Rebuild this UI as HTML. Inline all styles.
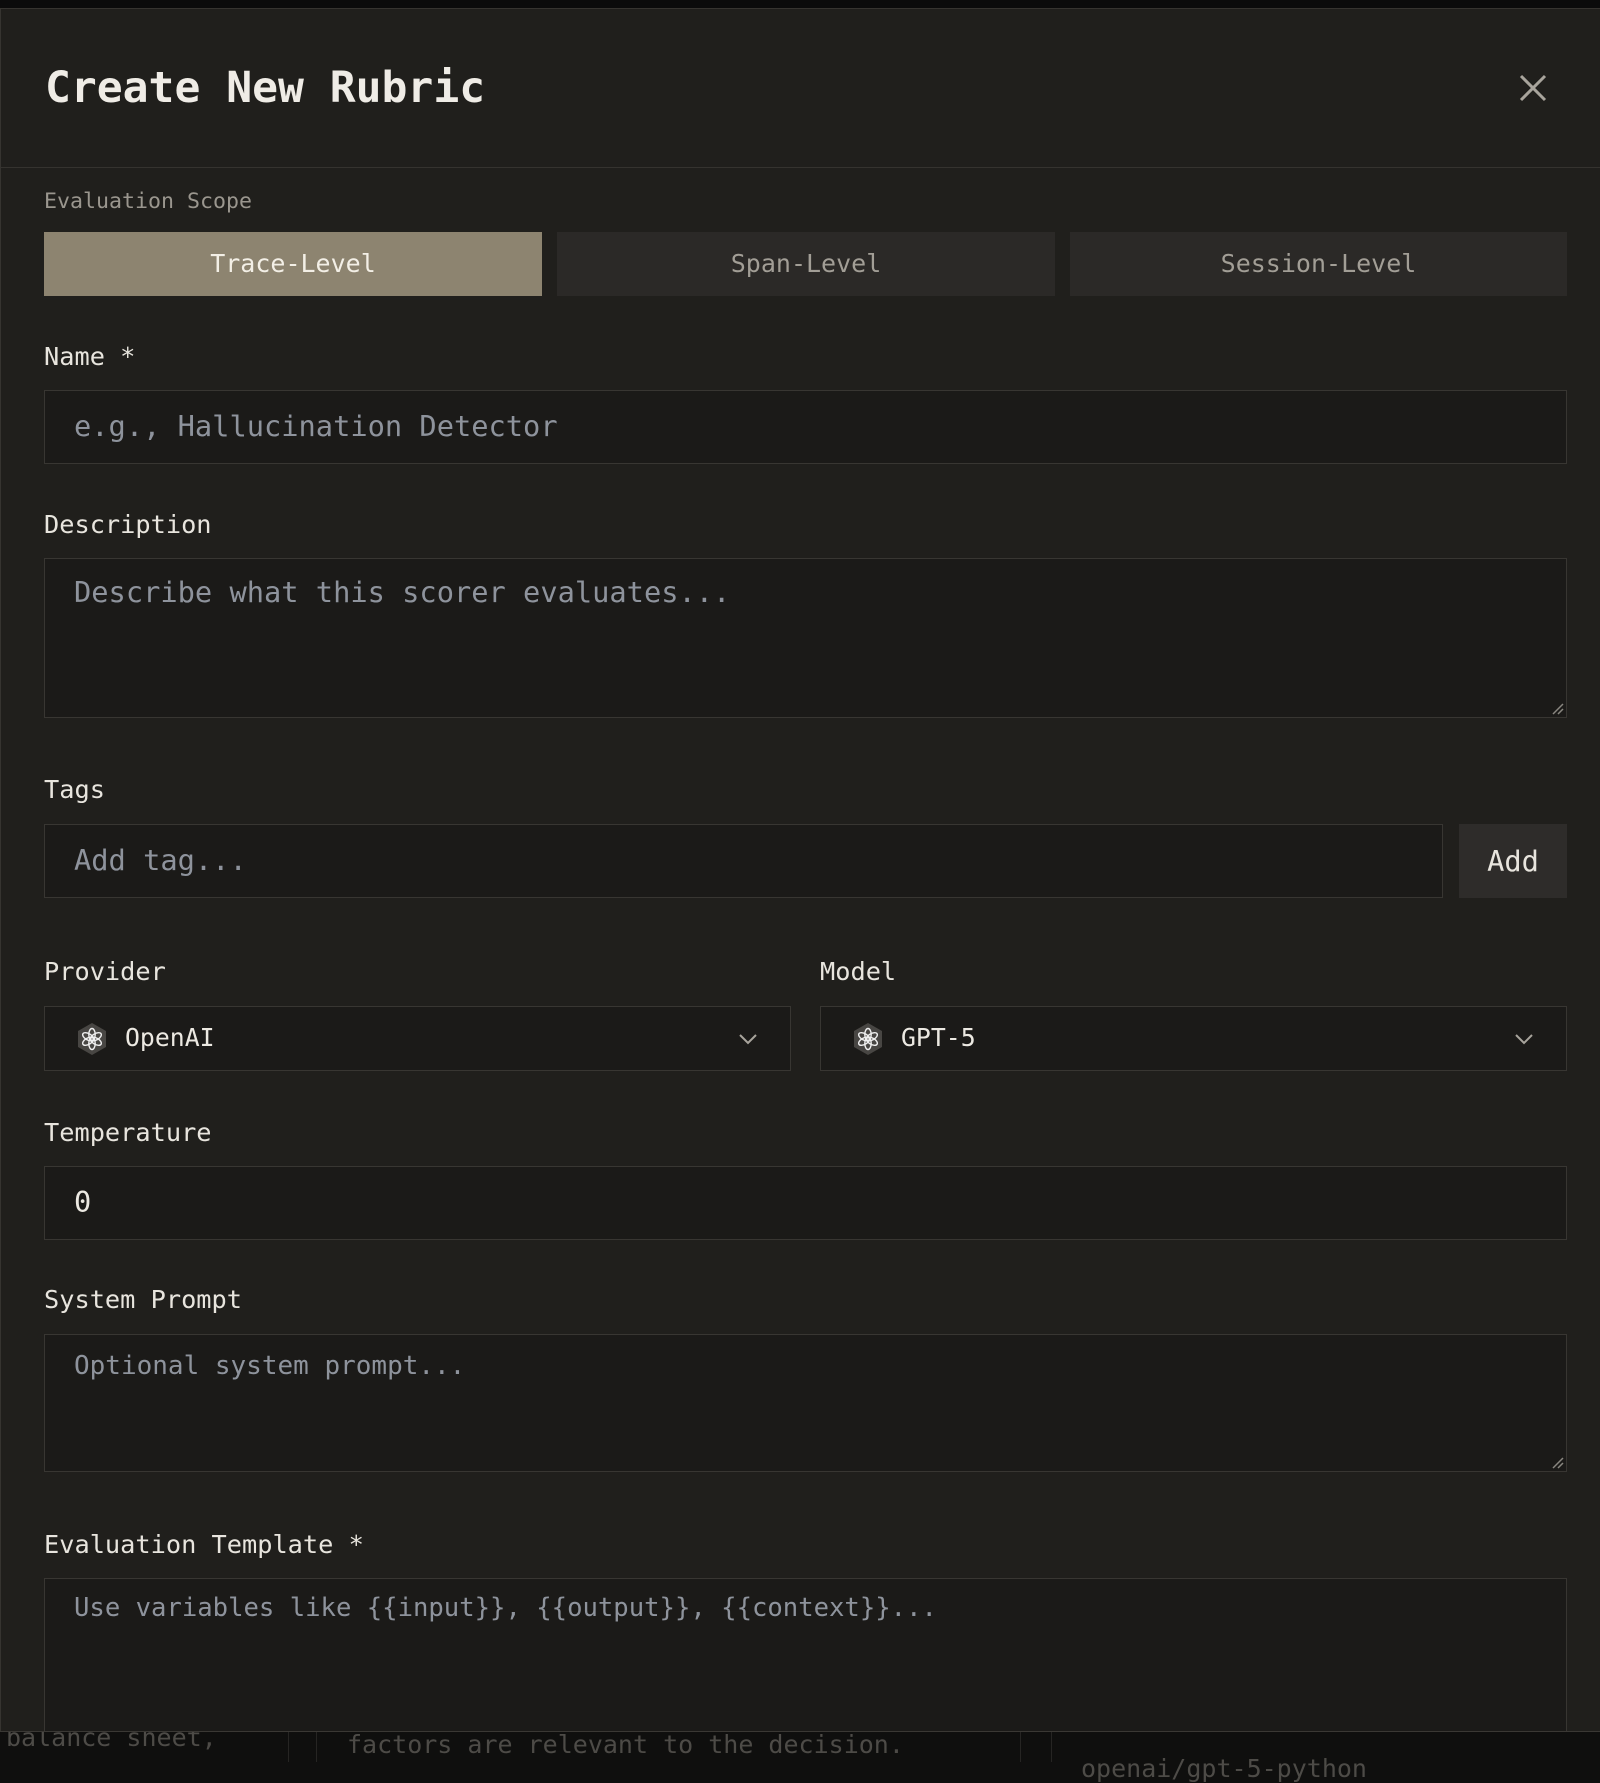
<!DOCTYPE html>
<html><head><meta charset="utf-8"><style>
*{box-sizing:border-box;margin:0;padding:0}
body{width:1600px;height:1762px;background:#0f0f0e;position:relative;overflow:hidden;font-family:"DejaVu Sans Mono","Liberation Mono",monospace;color:#e8e5de}
.a{position:absolute}
.modal{position:absolute;left:0;top:8px;width:1640px;height:1724px;background:#201f1c;border:1px solid #363430;overflow:hidden}
.top{position:absolute;left:0;top:0;width:1600px;height:8px;background:#0b0b0b}
.lbl{position:absolute;left:44px;font-size:25.3px;line-height:30px;color:#e8e5de}
.box{position:absolute;background:#1b1a18;border:1px solid #383632}
.ph{position:absolute;left:29px;font-size:28.7px;color:#8e939c;white-space:pre}
.tab{position:absolute;top:232px;height:64px;font-size:25px;line-height:64px;text-align:center;background:#2b2927;color:#a29e96}
.bgt{position:absolute;font-size:25px;color:#4d4b47;white-space:pre}
</style></head><body>
<div class="top"></div>
<div class="bgt" style="left:6px;top:1723px">balance sheet,</div>
<div class="bgt" style="left:347px;top:1730px">factors are relevant to the decision.</div>
<div class="bgt" style="left:1081px;top:1754px">openai/gpt-5-python</div>
<div class="a" style="left:288px;top:1732px;width:1px;height:30px;background:#262523"></div>
<div class="a" style="left:316px;top:1732px;width:1px;height:30px;background:#262523"></div>
<div class="a" style="left:1020px;top:1732px;width:1px;height:30px;background:#262523"></div>
<div class="a" style="left:1051px;top:1732px;width:1px;height:30px;background:#262523"></div>

<div class="modal">
 <div class="a" style="left:44px;top:52px;font-size:43px;font-weight:bold;line-height:54px;color:#efece6">Create New Rubric</div>
 <svg class="a" style="left:1517px;top:64px" width="30" height="30" viewBox="0 0 30 30"><path d="M3 3L27 27M27 3L3 27" stroke="#a8a49c" stroke-width="3"/></svg>
 <div class="a" style="left:0;top:158px;width:1640px;height:1px;background:#35332f"></div>
</div>

<div class="a" style="left:44px;top:189px;font-size:21.6px;line-height:26px;color:#9a968e">Evaluation Scope</div>
<div class="tab" style="left:44px;width:498px;background:#8d8470;color:#f3efe6">Trace-Level</div>
<div class="tab" style="left:557px;width:498px">Span-Level</div>
<div class="tab" style="left:1070px;width:497px">Session-Level</div>

<div class="lbl" style="top:342px">Name *</div>
<div class="box" style="left:44px;top:390px;width:1523px;height:74px"><div class="ph" style="top:18px">e.g., Hallucination Detector</div></div>

<div class="lbl" style="top:510px">Description</div>
<div class="box" style="left:44px;top:558px;width:1523px;height:160px"><div class="ph" style="top:16px">Describe what this scorer evaluates...</div>
<svg class="a" style="right:2px;bottom:2px" width="14" height="14"><path d="M13 3L3 13M13 8L8 13" stroke="#8a8780" stroke-width="1.5"/></svg></div>

<div class="lbl" style="top:775px">Tags</div>
<div class="box" style="left:44px;top:824px;width:1399px;height:74px"><div class="ph" style="top:18px">Add tag...</div></div>
<div class="a" style="left:1459px;top:824px;width:108px;height:74px;background:#2e2c2a;font-size:28.7px;line-height:74px;text-align:center;color:#e8e5de">Add</div>

<div class="lbl" style="top:957px">Provider</div>
<div class="lbl" style="top:957px;left:820px">Model</div>
<div class="box" style="left:44px;top:1006px;width:747px;height:65px">
 <svg class="a" style="left:30px;top:15px" width="34" height="34" viewBox="0 0 34 34"><path d="M17 1L31 9V25L17 33L3 25V9Z" fill="#484643"/><g fill="none" stroke="#eee" stroke-width="1.4"><g id="p"><ellipse cx="17" cy="12.5" rx="3.2" ry="6"/></g><use href="#p" transform="rotate(60 17 17)"/><use href="#p" transform="rotate(120 17 17)"/><use href="#p" transform="rotate(180 17 17)"/><use href="#p" transform="rotate(240 17 17)"/><use href="#p" transform="rotate(300 17 17)"/></g></svg>
 <div class="a" style="left:80px;top:16px;font-size:24.8px;color:#ece9e2">OpenAI</div>
 <svg class="a" style="left:693px;top:25px" width="20" height="14"><path d="M2 3L10 11L18 3" stroke="#a8a49c" stroke-width="2" fill="none"/></svg>
</div>
<div class="box" style="left:820px;top:1006px;width:747px;height:65px">
 <svg class="a" style="left:30px;top:15px" width="34" height="34" viewBox="0 0 34 34"><path d="M17 1L31 9V25L17 33L3 25V9Z" fill="#484643"/><g fill="none" stroke="#eee" stroke-width="1.4"><g id="q"><ellipse cx="17" cy="12.5" rx="3.2" ry="6"/></g><use href="#q" transform="rotate(60 17 17)"/><use href="#q" transform="rotate(120 17 17)"/><use href="#q" transform="rotate(180 17 17)"/><use href="#q" transform="rotate(240 17 17)"/><use href="#q" transform="rotate(300 17 17)"/></g></svg>
 <div class="a" style="left:80px;top:16px;font-size:24.8px;color:#ece9e2">GPT-5</div>
 <svg class="a" style="left:693px;top:25px" width="20" height="14"><path d="M2 3L10 11L18 3" stroke="#a8a49c" stroke-width="2" fill="none"/></svg>
</div>

<div class="lbl" style="top:1118px">Temperature</div>
<div class="box" style="left:44px;top:1166px;width:1523px;height:74px"><div class="ph" style="top:18px;color:#ece9e2">0</div></div>

<div class="lbl" style="top:1285px">System Prompt</div>
<div class="box" style="left:44px;top:1334px;width:1523px;height:138px"><div class="ph" style="top:16px;font-size:26px">Optional system prompt...</div>
<svg class="a" style="right:2px;bottom:2px" width="14" height="14"><path d="M13 3L3 13M13 8L8 13" stroke="#8a8780" stroke-width="1.5"/></svg></div>

<div class="lbl" style="top:1530px">Evaluation Template *</div>
<div class="box" style="left:44px;top:1578px;width:1523px;height:153px;border-bottom:none"><div class="ph" style="top:14px;font-size:25.6px">Use variables like {{input}}, {{output}}, {{context}}...</div></div>
<div class="a" style="left:0;top:1731px;width:1600px;height:1px;background:#3a3834"></div>
</body></html>
